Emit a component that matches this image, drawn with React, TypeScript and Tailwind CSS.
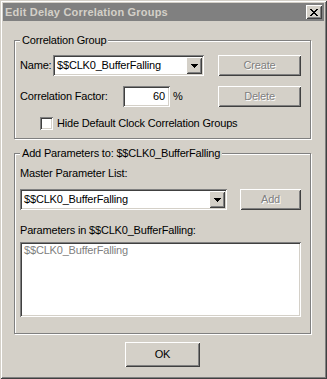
import React from "react";

const raised =
  "shadow-[inset_1px_1px_0_#fff,inset_-1px_-1px_0_#404040,inset_2px_2px_0_#d4d0c8,inset_-2px_-2px_0_#808080]";
const sunken =
  "shadow-[inset_1px_1px_0_#808080,inset_-1px_-1px_0_#fff,inset_2px_2px_0_#404040,inset_-2px_-2px_0_#d4d0c8]";
const etched = "border border-[#808080] shadow-[inset_1px_1px_0_#fff,1px_1px_0_#fff]";
const disabledText = "text-[#808080] [text-shadow:1px_1px_0_#fff]";

function Arrow() {
  return (
    <svg width="7" height="4" viewBox="0 0 7 4" shapeRendering="crispEdges">
      <path d="M0 0h7v1H0zM1 1h5v1H1zM2 2h3v1H2zM3 3h1v1H3z" fill="#000" />
    </svg>
  );
}

function Combo({ value, width }: { value: string; width: string }) {
  return (
    <div className={`${width} h-[21px] bg-white ${sunken} flex items-center`}>
      <span className="flex-1 pl-[4px] whitespace-nowrap overflow-hidden">{value}</span>
      <div className={`w-[16px] h-[17px] mr-[2px] bg-[#d4d0c8] ${raised} flex items-center justify-center`}>
        <Arrow />
      </div>
    </div>
  );
}

function Btn({ label, width, disabled, cls = "" }: { label: string; width: string; disabled?: boolean; cls?: string }) {
  return (
    <div
      className={`${width} h-[21px] bg-[#d4d0c8] ${raised} flex items-center justify-center ${
        disabled ? disabledText : "text-black"
      } ${cls}`}
    >
      {label}
    </div>
  );
}

export default function App() {
  return (
    <div
      className={`w-[327px] h-[379px] bg-[#d4d0c8] p-[3px] text-[11px] leading-[13px] tracking-[-0.18px] text-black font-['Liberation_Sans',Arial,sans-serif] shadow-[inset_1px_1px_0_#d4d0c8,inset_-1px_-1px_0_#404040,inset_2px_2px_0_#fff,inset_-2px_-2px_0_#808080]`}
    >
      {/* title bar */}
      <div className="h-[18px] bg-[#808080] flex items-center pl-[2px] pr-[2px]">
        <span className="flex-1 font-bold tracking-[0.2px] text-[#d4d0c8] whitespace-nowrap">
          Edit Delay Correlation Groups
        </span>
        <div className={`w-[16px] h-[14px] bg-[#d4d0c8] ${raised} flex items-center justify-center`}>
          <svg width="8" height="7" viewBox="0 0 8 7" shapeRendering="crispEdges">
            <path
              d="M0 0h2v1H0zM6 0h2v1H6zM1 1h2v1H1zM5 1h2v1H5zM2 2h4v1H2zM3 3h2v1H3zM2 4h4v1H2zM1 5h2v1H1zM5 5h2v1H5zM0 6h2v1H0zM6 6h2v1H6z"
              fill="#000"
            />
          </svg>
        </div>
      </div>

      <div className="pl-[11px] pt-[13px]">
        {/* correlation group */}
        <fieldset className={`w-[297px] h-[105px] ${etched} px-[5px]`}>
          <legend className="px-[2px] bg-[#d4d0c8]">Correlation Group</legend>
          <div className="mt-[8px] flex items-center h-[21px]">
            <span className="w-[33px]">Name:</span>
            <Combo value="$$CLK0_BufferFalling" width="w-[151px]" />
            <Btn label="Create" width="w-[83px]" disabled cls="ml-[14px]" />
          </div>
          <div className="mt-[10px] flex items-center h-[21px]">
            <span className="w-[103px]">Correlation Factor:</span>
            <div className={`w-[47px] h-[21px] bg-white ${sunken} flex items-center justify-end pr-[5px]`}>60</div>
            <span className="w-[48px] pl-[3px]">%</span>
            <Btn label="Delete" width="w-[83px]" disabled />
          </div>
          <div className="mt-[10px] flex items-center pl-[20px]">
            <div className={`w-[13px] h-[13px] bg-white ${sunken}`} />
            <span className="ml-[4px]">Hide Default Clock Correlation Groups</span>
          </div>
        </fieldset>

        {/* add parameters */}
        <fieldset className={`mt-[8px] w-[297px] h-[187px] ${etched} px-[5px]`}>
          <legend className="px-[2px] bg-[#d4d0c8]">Add Parameters to: $$CLK0_BufferFalling</legend>
          <div className="mt-[7px]">Master Parameter List:</div>
          <div className="mt-[9px] flex items-center">
            <Combo value="$$CLK0_BufferFalling" width="w-[207px]" />
            <Btn label="Add" width="w-[61px]" disabled cls="ml-[13px]" />
          </div>
          <div className="mt-[14px]">Parameters in $$CLK0_BufferFalling:</div>
          <div className={`mt-[5px] w-[281px] h-[75px] bg-white ${sunken} pl-[4px] pt-[2px] text-[#808080]`}>
            $$CLK0_BufferFalling
          </div>
        </fieldset>

        <div className={`mt-[8px] ml-[111px] w-[75px] h-[25px] bg-[#d4d0c8] ${raised} flex items-center justify-center`}>
          OK
        </div>
      </div>
    </div>
  );
}
